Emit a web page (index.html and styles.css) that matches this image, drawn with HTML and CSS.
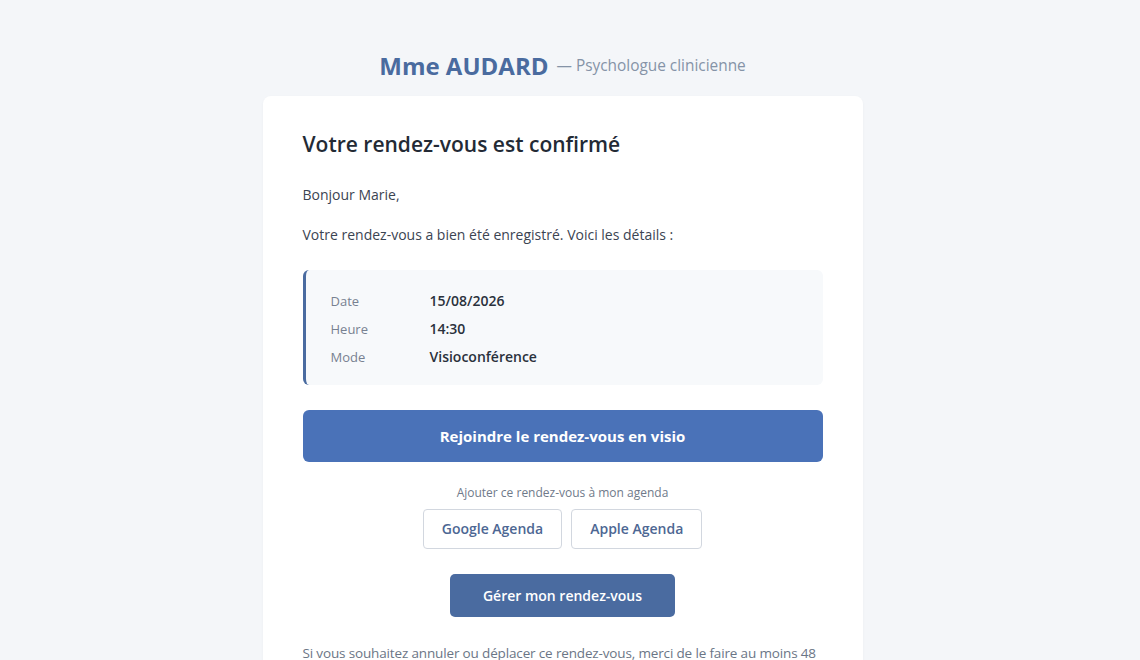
FILE: index.html
```html
<html lang="fr">
<head>
    <meta charset="utf-8">
    <title>Rendez-vous confirmé</title>
    <link rel="stylesheet" href="styles.css">
</head>
<body>

<div class="page">
    <div class="brand">
        <span class="brand-name">Mme AUDARD</span>
        <span class="brand-role">— Psychologue clinicienne</span>
    </div>

    <div class="card">
        <h1 class="card-title">Votre rendez-vous est confirmé</h1>
        <p>Bonjour Marie,</p>
        <p>Votre rendez-vous a bien été enregistré. Voici les détails :</p>

        <div class="details">
            <div class="details-row">
                <span class="details-label">Date</span>
                <span class="details-value">15/08/2026</span>
            </div>
            <div class="details-row">
                <span class="details-label">Heure</span>
                <span class="details-value">14:30</span>
            </div>
            <div class="details-row">
                <span class="details-label">Mode</span>
                <span class="details-value">Visioconférence</span>
            </div>
        </div>

        <a class="btn-join" href="#">Rejoindre le rendez-vous en visio</a>

        <div class="agenda">
            <div class="agenda-label">Ajouter ce rendez-vous à mon agenda</div>
            <div class="agenda-buttons">
                <a class="btn-agenda" href="#">Google Agenda</a>
                <a class="btn-agenda" href="#">Apple Agenda</a>
            </div>
        </div>

        <div class="manage">
            <a class="btn-manage" href="#">Gérer mon rendez-vous</a>
        </div>

        <p class="note">Si vous souhaitez annuler ou déplacer ce rendez-vous, merci de le faire au moins 48 heures à l'avance afin de libérer le créneau pour un autre patient.</p>

        <p class="note">À très bientôt,<br/>Mme AUDARD</p>
    </div>
</div>

</body>
</html>
```

FILE: styles.css
```css
:root {
    --background: #f4f6f9;
    --text: #2d3440;
    --muted: #6b7686;
    --primary: #4a72b8;
    --secondary: #4a6ba0;
}

* {
    box-sizing: border-box;
}

html, body {
    margin: 0;
    padding: 0;
    background: var(--background);
    color: var(--text);
    font-family: "Open Sans", "Noto Sans", sans-serif;
}

body {
    padding-right: 15px;
}

a {
    text-decoration: none;
}

.page {
    width: 600px;
    margin: 0 auto;
    padding: 46px 0 40px;
}

.brand {
    display: flex;
    justify-content: center;
    align-items: center;
    gap: 8px;
    height: 38px;
    margin-bottom: 12px;
}

.brand-name {
    font-size: 24px;
    font-weight: 700;
    color: #4a6b9f;
}

.brand-role {
    font-size: 15.4px;
    color: #8593a7;
}

.card {
    background: #fff;
    border-radius: 8px;
    padding: 30px 40px 40px;
    box-shadow: 0 1px 3px rgba(30, 40, 60, 0.04);
}

.card p {
    font-size: 14px;
    line-height: 20px;
    margin: 0 0 20px;
    color: #3b4452;
}

.card-title {
    font-size: 21px;
    font-weight: 600;
    color: #232a35;
    margin: 3px 0 26px;
    line-height: 30px;
}

.details {
    background: #f7f9fb;
    border-left: 3px solid var(--secondary);
    border-radius: 6px;
    padding: 17px 25px 14px;
    margin: 25px 0 25px;
}

.details-row {
    display: flex;
    line-height: 28px;
    font-size: 14px;
}

.details-label {
    width: 99px;
    color: #778191;
    font-size: 13px;
}

.details-value {
    font-weight: 600;
    color: #2a313c;
}

.btn-join {
    display: block;
    background: var(--primary);
    color: #fff;
    text-align: center;
    font-weight: 700;
    font-size: 15px;
    line-height: 52px;
    border-radius: 6px;
}

.agenda {
    text-align: center;
    margin-top: 21px;
}

.agenda-label {
    font-size: 12px;
    color: #6f7a8a;
    line-height: 20px;
    margin-bottom: 6px;
}

.agenda-buttons {
    display: flex;
    justify-content: center;
    gap: 9px;
}

.btn-agenda {
    display: inline-block;
    border: 1px solid #d2d7df;
    border-radius: 4px;
    padding: 0 18px;
    line-height: 38px;
    font-size: 14px;
    font-weight: 600;
    color: #4d6793;
    background: #fff;
}

.manage {
    text-align: center;
    margin: 25px 0 26px;
}

.btn-manage {
    display: inline-block;
    width: 225px;
    background: var(--secondary);
    color: #fff;
    font-size: 14px;
    font-weight: 600;
    line-height: 43px;
    border-radius: 5px;
}

.card p.note {
    color: #6b7686;
    font-size: 13.5px;
    letter-spacing: -0.15px;
}
```
